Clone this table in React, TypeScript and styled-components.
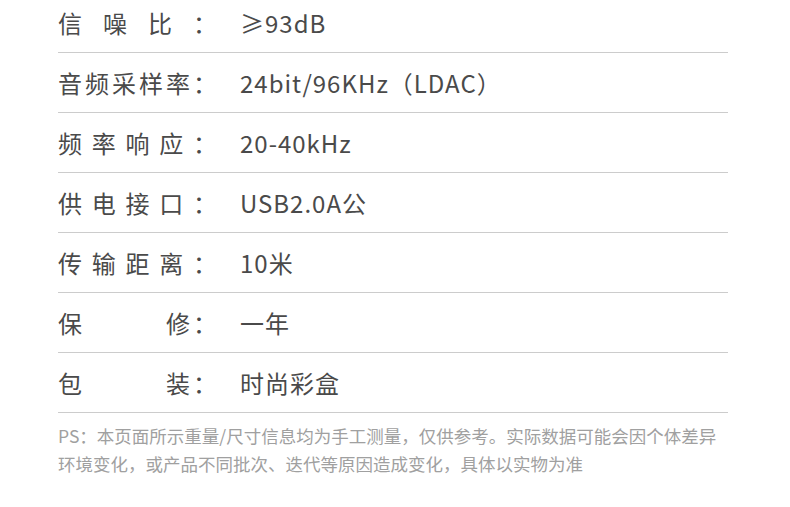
import React from "react";
import styled, { createGlobalStyle } from "styled-components";

type Spec = { label: string[]; value: string };

const specs: Spec[] = [
  { label: ["信", "噪", "比", "："], value: "≥93dB" },
  { label: ["音", "频", "采", "样", "率", "："], value: "24bit/96KHz（LDAC）" },
  { label: ["频", "率", "响", "应", "："], value: "20-40kHz" },
  { label: ["供", "电", "接", "口", "："], value: "USB2.0A公" },
  { label: ["传", "输", "距", "离", "："], value: "10米" },
  { label: ["保", "", "", "", "修", "："], value: "一年" },
  { label: ["包", "", "", "", "装", "："], value: "时尚彩盒" },
];

const GlobalStyle = createGlobalStyle`
  body {
    margin: 0;
    background: #fff;
    font-family: "Noto Sans CJK SC", "Noto Sans", sans-serif;
  }
`;

const Page = styled.div`
  width: 790px;
  height: 507px;
  overflow: hidden;
  padding: 0 62px 0 58px;
  box-sizing: border-box;
`;

const Table = styled.div`
  margin-top: -7px;
  display: flex;
  flex-direction: column;
`;

const Row = styled.div`
  height: 60px;
  display: flex;
  align-items: center;
  border-bottom: 1px solid #cccccc;
  box-sizing: border-box;
  color: #4a4a4a;
  font-size: 24px;
`;

const Label = styled.div`
  width: 159px;
  flex: none;
  display: flex;
  justify-content: space-between;
  margin-right: 23px;
`;

const Cell = styled.span`
  width: 24px;
  display: inline-block;
`;

const Value = styled.div`
  letter-spacing: 1px;
  white-space: nowrap;
`;

const Note = styled.div`
  padding-top: 9px;
  color: #a0a0a0;
  font-size: 17.5px;
  line-height: 28px;
  white-space: nowrap;
`;

export default function App() {
  return (
    <Page>
      <GlobalStyle />
      <Table>
        {specs.map((s) => (
          <Row key={s.value}>
            <Label>
              {s.label.map((c, i) => (
                <Cell key={i}>{c}</Cell>
              ))}
            </Label>
            <Value>{s.value}</Value>
          </Row>
        ))}
      </Table>
      <Note>
        <div>PS：本页面所示重量/尺寸信息均为手工测量，仅供参考。实际数据可能会因个体差异</div>
        <div>环境变化，或产品不同批次、迭代等原因造成变化，具体以实物为准</div>
      </Note>
    </Page>
  );
}
